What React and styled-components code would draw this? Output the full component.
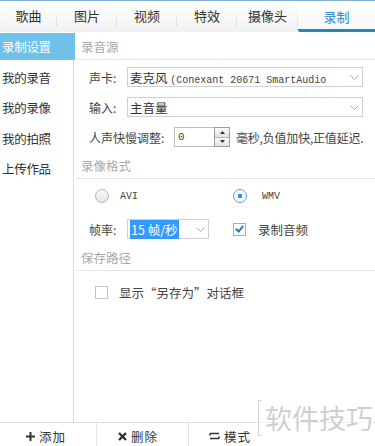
import styled, { createGlobalStyle } from "styled-components";

const GlobalStyle = createGlobalStyle`
  html, body {
    margin: 0;
    padding: 0;
    background: #fff;
  }
  body {
    font-family: "Noto Sans CJK SC", "Liberation Sans", sans-serif;
    color: #333;
  }
`;

const tabs = [
  { label: "歌曲", width: 57 },
  { label: "图片", width: 60 },
  { label: "视频", width: 60 },
  { label: "特效", width: 60 },
  { label: "摄像头", width: 61 },
  { label: "录制", width: 77, active: true },
];

const sideItems = ["录制设置", "我的录音", "我的录像", "我的拍照", "上传作品"];

export default function App() {
  return (
    <Frame>
      <GlobalStyle />
      <TabBar>
        {tabs.map((t, i) => (
          <Tab key={t.label} $w={t.width} $active={t.active} $last={i === tabs.length - 1}>
            {t.label}
          </Tab>
        ))}
      </TabBar>

      <Body>
        <Sidebar>
          {sideItems.map((s, i) => (
            <SideItem key={s} $active={i === 0}>
              {s}
            </SideItem>
          ))}
        </Sidebar>

        <Content>
          <SectionHeader>录音源</SectionHeader>
          <Rows>
            <Row>
              <Label $w={34}>声卡:</Label>
              <Select $w={236}>
                <SelectText>
                  麦克风 <Mono>(Conexant 20671 SmartAudio</Mono>
                </SelectText>
                <Chevron />
              </Select>
            </Row>
            <Row>
              <Label $w={34}>输入:</Label>
              <Select $w={236}>
                <SelectText>主音量</SelectText>
                <Chevron />
              </Select>
            </Row>
            <Row>
              <Label $w={81}>人声快慢调整:</Label>
              <Spin>
                <SpinInput>0</SpinInput>
                <SpinButtons>
                  <SpinBtn>
                    <svg width="5" height="3" viewBox="0 0 5 3">
                      <path d="M0 3 L2.5 0 L5 3 Z" fill="#333" />
                    </svg>
                  </SpinBtn>
                  <SpinBtn>
                    <svg width="5" height="3" viewBox="0 0 5 3">
                      <path d="M0 0 L2.5 3 L5 0 Z" fill="#333" />
                    </svg>
                  </SpinBtn>
                </SpinButtons>
              </Spin>
              <Hint>毫秒,负值加快,正值延迟.</Hint>
            </Row>
          </Rows>

          <SectionHeader>录像格式</SectionHeader>
          <Rows $gap={13}>
            <OptionRow>
              <Option $w={138}>
                <Radio />
                <Mono>AVI</Mono>
              </Option>
              <Option $gap={15}>
                <Radio $checked />
                <Mono>WMV</Mono>
              </Option>
            </OptionRow>
            <Row>
              <Label $w={34}>帧率:</Label>
              <Select $w={82}>
                <SelectText>
                  <Selected>15 帧/秒</Selected>
                </SelectText>
                <Chevron />
              </Select>
              <Option $gap={12} $ml={24}>
                <Check $checked />
                <span>录制音频</span>
              </Option>
            </Row>
          </Rows>

          <SectionHeader>保存路径</SectionHeader>
          <Rows $pt={12}>
            <Option $ml={19} $gap={11}>
              <Check />
              <span>显示“另存为”对话框</span>
            </Option>
          </Rows>
        </Content>
      </Body>

      <Toolbar>
        <ToolButton>
          <svg width="9" height="9" viewBox="0 0 9 9">
            <path d="M3.5 0h2v3.5H9v2H5.5V9h-2V5.5H0v-2h3.5z" fill="#333" />
          </svg>
          添加
        </ToolButton>
        <ToolSep />
        <ToolButton>
          <svg width="9" height="9" viewBox="0 0 9 9">
            <path d="M1 1 L8 8 M8 1 L1 8" stroke="#333" strokeWidth="2.4" />
          </svg>
          删除
        </ToolButton>
        <ToolSep />
        <ToolButton>
          <svg width="11" height="8" viewBox="0 0 11 8">
            <path
              d="M1 1.5 H10 M1 6.5 H10 M1 1.5 V3.5 M10 6.5 V4.5"
              stroke="#333"
              strokeWidth="1.6"
              fill="none"
            />
          </svg>
          模式
        </ToolButton>
        <Watermark>
          <Bracket />
          软件技巧
        </Watermark>
      </Toolbar>
    </Frame>
  );
}

function Chevron() {
  return (
    <ChevronBox>
      <svg width="9" height="5" viewBox="0 0 9 5">
        <path d="M0.5 0.5 L4.5 4.5 L8.5 0.5" stroke="#aaa" strokeWidth="1" fill="none" />
      </svg>
    </ChevronBox>
  );
}

// Styled components
const Frame = styled.div`
  width: 375px;
  height: 446px;
  display: flex;
  flex-direction: column;
  border-top: 1px solid #7fb0d2;
  box-sizing: border-box;
  position: relative;
  overflow: hidden;
`;

const TabBar = styled.div`
  display: flex;
  height: 31px;
  background: linear-gradient(#ffffff, #f1f1f1);
  flex-shrink: 0;
`;

const Tab = styled.div`
  width: ${(p) => p.$w}px;
  flex-shrink: 0;
  display: flex;
  align-items: center;
  justify-content: center;
  font-size: 13px;
  color: ${(p) => (p.$active ? "#2b8bc6" : "#333")};
  position: relative;
  box-sizing: border-box;
  background: ${(p) => (p.$active ? "linear-gradient(#ffffff, #f7f7f7)" : "transparent")};
  border-bottom: 3px solid ${(p) => (p.$active ? "#1e8bb7" : "transparent")};
  border-bottom-left-radius: ${(p) => (p.$active ? "2px" : "0")};
  padding-top: ${(p) => (p.$active ? "3px" : "0")};

  &::after {
    content: "";
    display: ${(p) => (p.$last || p.$active ? "none" : "block")};
    position: absolute;
    right: 0;
    top: 8px;
    bottom: 3px;
    width: 1px;
    background: linear-gradient(#ffffff, #d8d8d8);
  }
`;

const Body = styled.div`
  flex: 1;
  display: flex;
  min-height: 0;
`;

const Sidebar = styled.div`
  width: 74px;
  flex-shrink: 0;
  border-right: 1px solid #dcdcdc;
  padding-top: 1px;
  box-sizing: border-box;
`;

const SideItem = styled.div`
  height: ${(p) => (p.$active ? "27px" : "30.5px")};
  margin-bottom: ${(p) => (p.$active ? "2px" : "0")};
  display: flex;
  align-items: center;
  padding-left: 2px;
  font-size: 12.5px;
  letter-spacing: -0.3px;
  width: 73px;
  background: ${(p) => (p.$active ? "#6dc1ea" : "transparent")};
  color: ${(p) => (p.$active ? "#fff" : "#333")};
`;

const Content = styled.div`
  flex: 1;
  padding-left: 2px;
  padding-top: 2px;
`;

const SectionHeader = styled.div`
  font-size: 12.5px;
  color: #a9a9a9;
  padding-left: 5px;
  height: 25px;
  line-height: 25px;
  border-bottom: 1px solid #e3e3e3;
`;

const Rows = styled.div`
  display: flex;
  flex-direction: column;
  gap: ${(p) => (p.$gap ? `${p.$gap}px` : "10px")};
  padding: ${(p) => (p.$pt ? `${p.$pt}px` : "7px")} 0 6px;
`;

const Row = styled.div`
  display: flex;
  align-items: center;
  height: 20px;
  padding-left: 13px;
  font-size: 12px;
`;

const Label = styled.span`
  color: #444;
  width: ${(p) => (p.$w ? `${p.$w}px` : "auto")};
  margin-right: 4px;
  white-space: nowrap;
`;

const Select = styled.div`
  width: ${(p) => p.$w}px;
  height: 20px;
  box-sizing: border-box;
  border: 1px solid #cfcfcf;
  display: flex;
  align-items: center;
  padding-left: 2px;
  background: #fff;
`;

const SelectText = styled.div`
  flex: 1;
  font-size: 12.5px;
  color: #333;
  white-space: nowrap;
  overflow: hidden;
`;

const Mono = styled.span`
  font-family: "Liberation Mono", "DejaVu Sans Mono", monospace;
  font-size: 10px;
  color: #444;
`;

const ChevronBox = styled.div`
  width: 16px;
  display: flex;
  align-items: center;
  justify-content: center;
  flex-shrink: 0;
`;

const Selected = styled.span`
  background: #3399ff;
  color: #fff;
  padding: 0 1px;
`;

const Spin = styled.div`
  display: flex;
  height: 20px;
`;

const SpinInput = styled.div`
  width: 40px;
  box-sizing: border-box;
  border: 1px solid #bdbdbd;
  border-right: none;
  font-family: "Liberation Mono", monospace;
  font-size: 11px;
  padding-left: 3px;
  line-height: 18px;
  color: #444;
`;

const SpinButtons = styled.div`
  display: flex;
  flex-direction: column;
  width: 16px;
  border: 1px solid #9c9c9c;
  box-sizing: border-box;
`;

const SpinBtn = styled.div`
  flex: 1;
  display: flex;
  align-items: center;
  justify-content: center;
  background: linear-gradient(#fafafa, #e2e2e2);
  & + & {
    border-top: 1px solid #b5b5b5;
  }
`;

const Hint = styled.span`
  margin-left: 6px;
  font-size: 12px;
  letter-spacing: -0.2px;
  color: #444;
  white-space: nowrap;
`;

const OptionRow = styled.div`
  display: flex;
  align-items: center;
  height: 20px;
  padding-left: 19px;
`;

const Option = styled.label`
  display: flex;
  align-items: center;
  gap: ${(p) => (p.$gap ? `${p.$gap}px` : "11px")};
  width: ${(p) => (p.$w ? `${p.$w}px` : "auto")};
  margin-left: ${(p) => (p.$ml ? `${p.$ml}px` : "0")};
  font-size: 12.5px;
  color: #444;
`;

const Radio = styled.span`
  width: 12px;
  height: 12px;
  border-radius: 50%;
  border: 1px solid ${(p) => (p.$checked ? "#5aa5d8" : "#b4b4b4")};
  background: ${(p) =>
    p.$checked
      ? "radial-gradient(circle, #2f8ad0 0 2px, #f3f8fc 2.5px)"
      : "linear-gradient(#fafafa, #e6e6e6)"};
  flex-shrink: 0;
`;

const Check = styled.span`
  width: 11px;
  height: 11px;
  border: 1px solid ${(p) => (p.$checked ? "#8fb3cc" : "#c4c4c4")};
  background: #fff;
  flex-shrink: 0;
  display: flex;
  align-items: center;
  justify-content: center;

  &::after {
    content: "";
    display: ${(p) => (p.$checked ? "block" : "none")};
    width: 3px;
    height: 6px;
    border: solid #2a76b8;
    border-width: 0 2px 2px 0;
    transform: translateY(-1px) rotate(40deg);
  }
`;

const Toolbar = styled.div`
  height: 23px;
  flex-shrink: 0;
  display: flex;
  align-items: center;
  border-top: 1px solid #dedede;
  position: relative;
  font-size: 12.5px;
`;

const ToolButton = styled.div`
  width: 92px;
  display: flex;
  align-items: center;
  justify-content: center;
  gap: 4px;
  color: #333;
  letter-spacing: 1px;
  padding-top: 3px;
`;

const ToolSep = styled.div`
  width: 1px;
  height: 100%;
  background: #e2e2e2;
  margin-left: 4px;
  margin-right: -5px;
`;

const Watermark = styled.div`
  position: absolute;
  right: 2px;
  bottom: 9px;
  display: flex;
  align-items: center;
  gap: 3px;
  font-size: 27px;
  color: rgba(160, 160, 160, 0.5);
  background: rgba(255, 255, 255, 0.6);
  line-height: 38px;
  padding-left: 2px;
`;

const Bracket = styled.span`
  width: 4px;
  height: 36px;
  border: 1px solid #d5d5d5;
  border-right: none;
  box-sizing: border-box;
`;
